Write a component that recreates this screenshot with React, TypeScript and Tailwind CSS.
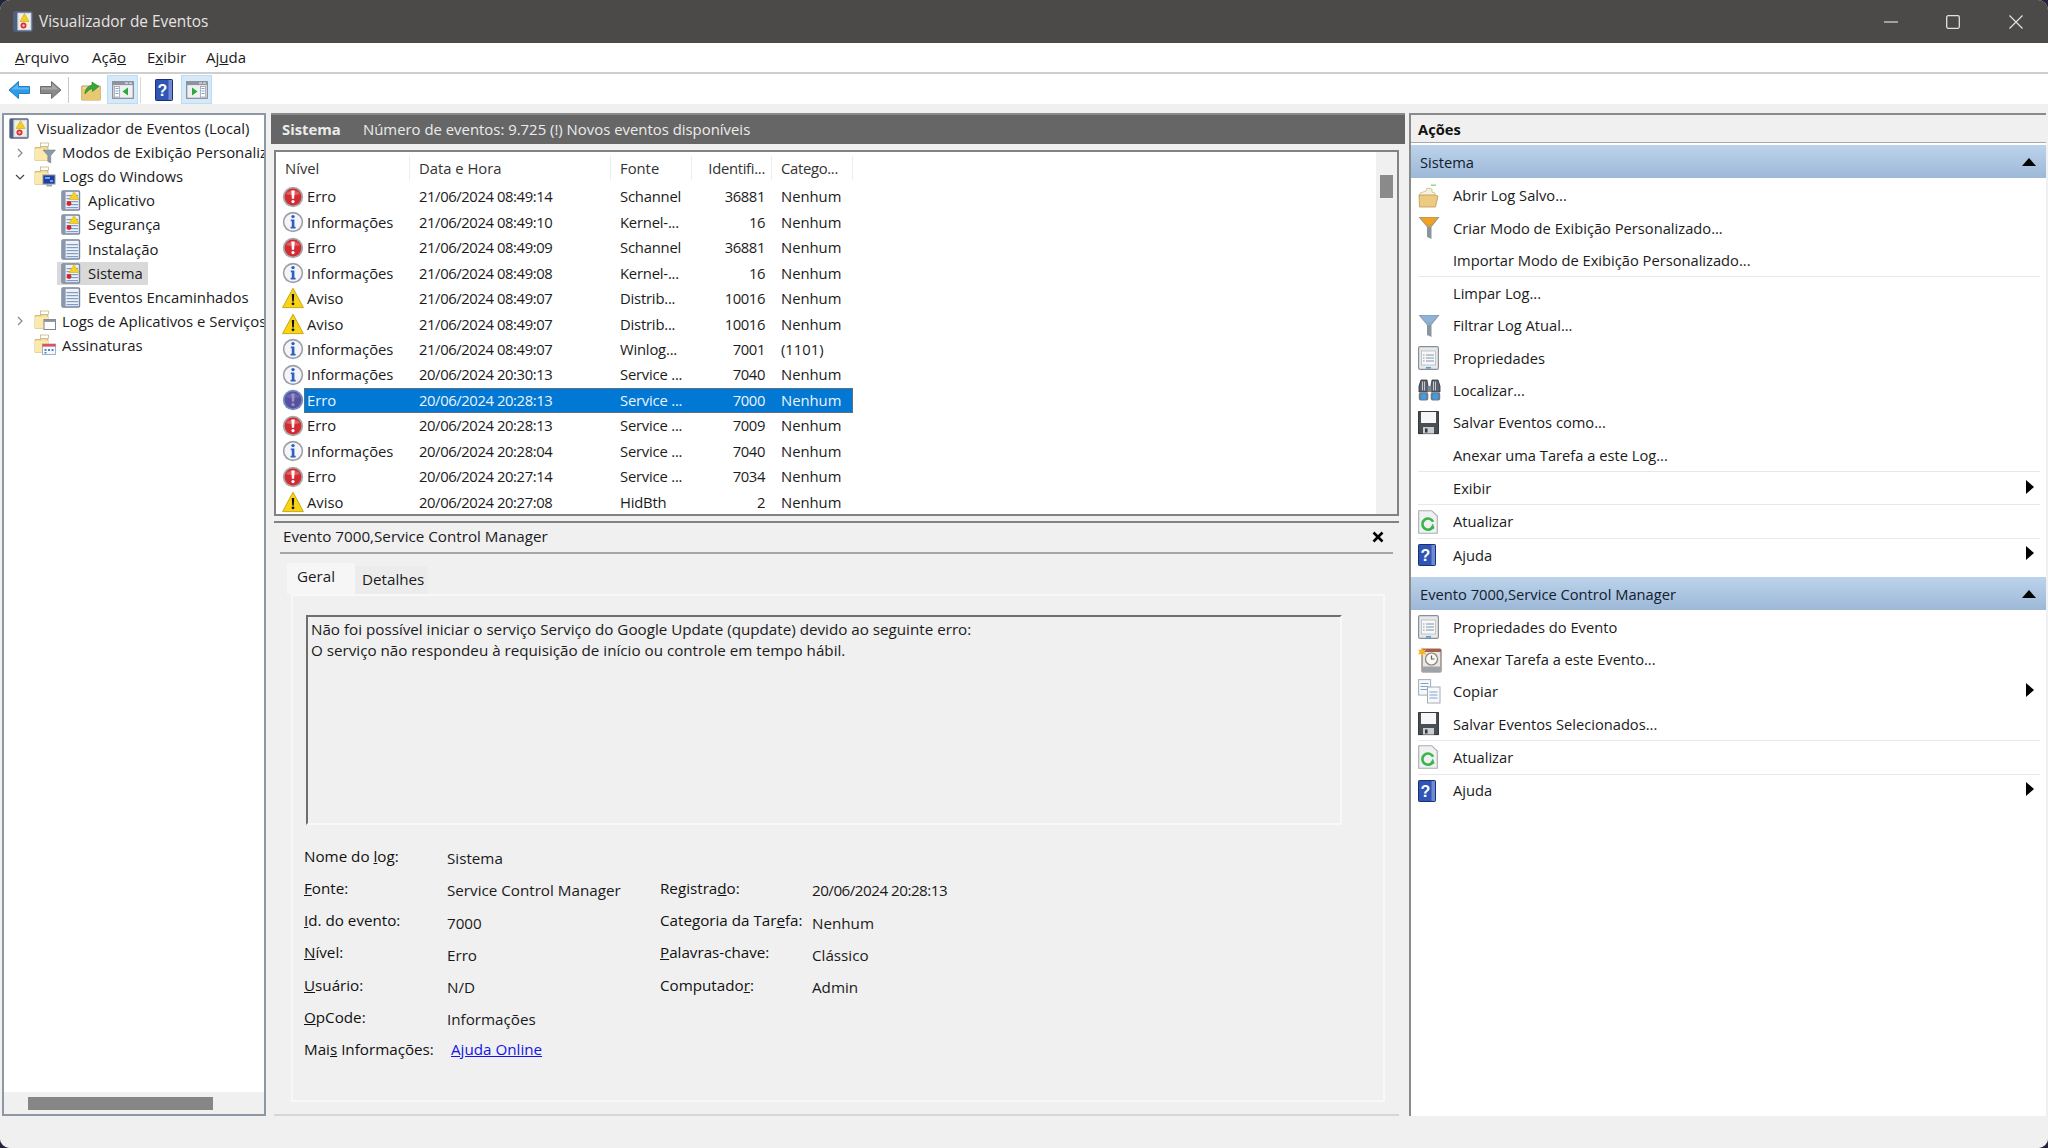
import type { ReactNode } from "react";

// ---- event level icons
function ErrorIcon({ selected }: { selected?: boolean }) {
  return (
    <svg width="22" height="22" viewBox="0 0 22 22" className="shrink-0">
      <circle cx="11" cy="11" r="10.2" fill={selected ? "#6f8fc0" : "#a8a8a8"} />
      <circle cx="11" cy="11" r="8.4" fill={selected ? "#5a4f9e" : "#d42a32"} />
      <path d="M4 8a8 7 0 0 1 14 0c-3 1.5-11 1.5-14 0z" fill="#fff" opacity={selected ? 0.12 : 0.25} />
      <path d="M9.3 4.5h3.4l-.6 8.2h-2.2z" fill={selected ? "#8f93cf" : "#fff"} />
      <circle cx="11" cy="15.6" r="1.6" fill={selected ? "#8f93cf" : "#fff"} />
    </svg>
  );
}

function InfoIcon() {
  return (
    <svg width="22" height="22" viewBox="0 0 22 22" className="shrink-0">
      <circle cx="11" cy="11" r="10.2" fill="#9c9fa6" />
      <circle cx="11" cy="11" r="8.6" fill="#f3f5f8" />
      <circle cx="11" cy="5.6" r="1.7" fill="#2f5fc4" />
      <path d="M8.8 8.6h3.6v7.2h1.2v1.6H8.6v-1.6h1.2v-5.6h-1z" fill="#2f5fc4" />
    </svg>
  );
}

function WarnIcon() {
  return (
    <svg width="22" height="22" viewBox="0 0 22 22" className="shrink-0">
      <path d="M11 1.2 21.4 20.6H.6z" fill="#f7d417" stroke="#c9a80f" strokeWidth="1" strokeLinejoin="round" />
      <path d="M9.8 7h2.4l-.4 7.4h-1.6z" fill="#111" />
      <circle cx="11" cy="16.8" r="1.4" fill="#111" />
    </svg>
  );
}

// ---- tree icons
function LogIcon({ alert }: { alert?: boolean }) {
  return (
    <svg width="20" height="21" viewBox="0 0 20 21" className="shrink-0">
      <rect x="1" y="1" width="17.5" height="19" rx="1" fill="#eef2f8" stroke="#76859a" strokeWidth="1.4" />
      <rect x="1" y="1" width="3.6" height="19" fill="#8a97aa" />
      {[5, 8, 11, 14, 17].map((y) => (
        <rect key={y} x="5.5" y={y} width="11.5" height="1.2" fill="#7d9cc8" />
      ))}
      {alert && <path d="M13 1.5 18 9.5H8z" fill="#f7d21e" stroke="#c9a419" strokeWidth=".5" />}
      {alert && <circle cx="8" cy="13.5" r="2.4" fill="#d5232c" />}
    </svg>
  );
}

function RootIcon() {
  return (
    <svg width="20" height="21" viewBox="0 0 20 21" className="shrink-0">
      <rect x="1" y="1" width="18" height="19" rx="1" fill="#d7dee9" stroke="#56688a" strokeWidth="1.4" />
      <rect x="1" y="1" width="3.4" height="19" fill="#4f5f80" />
      <rect x="6" y="3" width="11" height="15" fill="#f2f0dd" />
      <path d="M11.5 2.5 16 10.5H7z" fill="#f5cf1d" stroke="#b99a18" strokeWidth=".5" />
      <circle cx="10.5" cy="14.5" r="3" fill="#d8303a" />
      <circle cx="10.5" cy="14.5" r="1.2" fill="#f6c0c0" />
    </svg>
  );
}

function Folder({ children }: { children?: ReactNode }) {
  return (
    <svg width="22" height="22" viewBox="0 0 22 22" className="shrink-0">
      <path d="M1 5.5h6l1.2-2h5v2h.8v12.8H1z" fill="#f6de95" stroke="#c9b06a" strokeWidth=".8" />
      <rect x="6.5" y="1" width="8" height="3.5" fill="#fff" stroke="#b9a878" strokeWidth=".7" />
      <rect x="1" y="7" width="13" height="11.3" fill="#fbe9ae" />
      {children}
    </svg>
  );
}

function FolderFunnel() {
  return (
    <Folder>
      <path d="M9 8h12.5l-4.7 5.5V21l-3-1.6v-5.9z" fill="#8c9aa8" stroke="#6a7785" strokeWidth=".5" />
    </Folder>
  );
}

function FolderMonitor() {
  return (
    <Folder>
      <rect x="9" y="9" width="12" height="9" fill="#1d3f9f" stroke="#8b95a6" strokeWidth="1" />
      <path d="M11 11h5v2h-5zM16 14h3v2h-3z" fill="#75a3e8" />
      <rect x="12.5" y="18.5" width="5.5" height="2" fill="#9aa3b0" />
    </Folder>
  );
}

function FolderWindow() {
  return (
    <Folder>
      <rect x="10" y="9.5" width="11.5" height="10" fill="#fff" stroke="#7f8691" strokeWidth="1" />
      <rect x="10" y="9.5" width="11.5" height="2.4" fill="#8a93a0" />
    </Folder>
  );
}

function FolderCalendar() {
  return (
    <Folder>
      <rect x="8.5" y="10" width="13" height="10.5" fill="#f5f8fd" stroke="#8aa0bd" strokeWidth=".8" />
      <rect x="8.5" y="10" width="13" height="2.6" fill="#d8555a" />
      <path d="M10.5 15h2v2h-2zM14 15h2v2h-2zM17.5 15h2v2h-2zM10.5 18h2v1.5h-2z" fill="#4f88d0" />
    </Folder>
  );
}

// ---- toolbar icons
function ArrowIcon({ dir, color, edge }: { dir: "left" | "right"; color: string; edge: string }) {
  return (
    <svg width="23" height="20" viewBox="0 0 23 20" className={dir === "right" ? "scale-x-[-1]" : ""}>
      <path d="M1 10 10.5 1.5v5h11v7h-11v5z" fill={color} stroke={edge} strokeWidth="1" strokeLinejoin="round" />
      <path d="M3.5 9.5 10 4v3.5h11v2z" fill="#fff" opacity=".25" />
    </svg>
  );
}

function UpFolderIcon() {
  return (
    <svg width="20" height="22" viewBox="0 0 20 22">
      <path d="M.8 7h18.4v14H.8z" fill="#f1d98f" stroke="#b79f5f" strokeWidth="1" />
      <path d="M.8 10h18.4v11H.8z" fill="#e9c873" />
      <path d="M4 15c0-5 3-8 7-9V3l7 4.5-6.5 5V9.4C8.6 10 6.5 12 4 15z" fill="#36a83a" stroke="#217c27" strokeWidth=".6" />
    </svg>
  );
}

function PaneIcon({ side }: { side: "left" | "right" }) {
  return (
    <svg width="22" height="18" viewBox="0 0 22 18">
      <rect x=".7" y=".7" width="20.6" height="16.6" fill="#eef0f3" stroke="#848b95" strokeWidth="1.2" />
      <rect x=".7" y=".7" width="20.6" height="3.4" fill="#8d949e" />
      <path d="M17 1.5h3v1.2h-3zM13 1.5h3v1.2h-3z" fill="#dfe3e8" />
      {side === "left" ? (
        <>
          <rect x="2.5" y="5.5" width="5" height="10.5" fill="#fff" stroke="#8d97a3" strokeWidth=".7" />
          <path d="M3.5 7.5h3M3.5 10h3M3.5 12.5h3" stroke="#7da0c8" strokeWidth="1" />
          <path d="M16 6.5v8l-5.5-4z" fill="#2ea83a" />
        </>
      ) : (
        <>
          <rect x="14.5" y="5.5" width="5" height="10.5" fill="#fff" stroke="#8d97a3" strokeWidth=".7" />
          <path d="M15.5 7.5h3M15.5 10h3M15.5 12.5h3" stroke="#7da0c8" strokeWidth="1" />
          <path d="M6 6.5v8l5.5-4z" fill="#2ea83a" />
        </>
      )}
    </svg>
  );
}

function HelpBookIcon() {
  return (
    <svg width="18" height="22" viewBox="0 0 18 22">
      <rect x=".5" y=".5" width="17" height="21" rx=".8" fill="#2f55b5" stroke="#1c2f73" strokeWidth="1" />
      <rect x="13.5" y="1" width="3.5" height="20" fill="#6f8bd6" />
      <text x="7.5" y="16.5" textAnchor="middle" fontSize="16" fontWeight="700" fill="#fff" fontFamily="Liberation Sans, sans-serif">?</text>
    </svg>
  );
}

// ---- action pane icons
function OpenFolderIcon() {
  return (
    <svg width="22" height="24" viewBox="0 0 22 24">
      <path d="M13 .6h5v1.2h-5z" fill="#6fd56f" />
      <path d="M2 9l6-2 1-3 5 1v3l3 1v3H2z" fill="#f5f1dd" stroke="#c5b689" strokeWidth=".7" />
      <path d="M1 11h16l3 1-2.5 11H1.5z" fill="#eccb80" stroke="#b99b55" strokeWidth=".8" />
    </svg>
  );
}

function FunnelIcon({ top, stem }: { top: string; stem: string }) {
  return (
    <svg width="22" height="24" viewBox="0 0 22 24">
      <path d="M.5 1h21L13.5 11v12l-4.5-2V11z" fill={stem} />
      <path d="M2 1.5h18l-5.5 6.5h-7z" fill={top} />
      <path d="M7.5 8h7l-1.2 3h-4.6z" fill={top} opacity=".7" />
    </svg>
  );
}

function SheetIcon() {
  return (
    <svg width="21" height="24" viewBox="0 0 21 24">
      <rect x=".6" y=".6" width="19.8" height="22.8" rx="1.5" fill="#e6e8ea" stroke="#8b8f95" strokeWidth="1.2" />
      <rect x="3.5" y="5" width="14" height="14" fill="#f7f8f9" stroke="#aeb3b8" strokeWidth=".7" />
      <path d="M5 9h1.5M8 9h8M5 12h1.5M8 12h8M5 15h1.5M8 15h8" stroke="#8395ab" strokeWidth="1.1" />
      <rect x="8" y="21" width="5" height="1.6" fill="#45a0da" />
    </svg>
  );
}

function BinocularsIcon() {
  return (
    <svg width="23" height="24" viewBox="0 0 23 24">
      <path d="M3 2h6l1 6v6H1V8z" fill="#59626e" stroke="#2e343c" strokeWidth=".8" />
      <path d="M14 2h6l2 6v6h-9V8z" fill="#59626e" stroke="#2e343c" strokeWidth=".8" />
      <path d="M4.5 3.5v9M6.5 3.5v9M15.5 3.5v9M17.5 3.5v9" stroke="#cfd4da" strokeWidth=".9" />
      <rect x="9.5" y="8" width="4" height="6" fill="#7f8791" />
      <rect x=".8" y="14.5" width="9.5" height="8" rx="2" fill="#6f7a88" />
      <rect x="12.7" y="14.5" width="9.5" height="8" rx="2" fill="#6f7a88" />
      <circle cx="5.5" cy="18.5" r="3" fill="#3d9ee8" />
      <circle cx="17.5" cy="18.5" r="3" fill="#3d9ee8" />
    </svg>
  );
}

function FloppyIcon() {
  return (
    <svg width="21" height="24" viewBox="0 0 21 24">
      <rect x=".6" y=".6" width="19.8" height="22" fill="#4a4f55" stroke="#2b2e33" strokeWidth="1" />
      <rect x="3" y="1" width="15" height="11" fill="#f6f6f6" />
      <rect x="5" y="16" width="11" height="6.5" fill="#c9ccd0" />
      <rect x="7" y="17.5" width="2.5" height="4" fill="#33363b" />
    </svg>
  );
}

function RefreshIcon() {
  return (
    <svg width="20" height="24" viewBox="0 0 20 24">
      <path d="M.7.7h13l5.6 5.4v17.2H.7z" fill="#f0f1f2" stroke="#a8adb3" strokeWidth="1.1" />
      <path d="M14.8 17a5.6 5.6 0 1 1 .3-5.2" fill="none" stroke="#3ab54a" strokeWidth="2.6" />
      <path d="M10.5 21l6-2.8-1.6-4.6z" fill="#3ab54a" />
    </svg>
  );
}

function TaskIcon() {
  return (
    <svg width="24" height="26" viewBox="0 0 24 26">
      <rect x="4" y="2" width="19" height="23" rx="1" fill="#e8e6e3" stroke="#83776d" strokeWidth="1.2" />
      <rect x="4" y="2" width="19" height="3" fill="#a85d4a" />
      <rect x="4" y="19.5" width="19" height="5.5" fill="#9fa3a8" />
      <circle cx="13.5" cy="12" r="6" fill="#fbf7ec" stroke="#83837f" strokeWidth="1.2" />
      <path d="M13.5 8.5V12h3" stroke="#52677c" strokeWidth="1.2" fill="none" />
      <path d="M4 0l1.3 3 3-.6L6.4 5 8.5 7.4 5.3 7 4 10 2.7 7 0 7.4 1.6 5 0 2.4l2.7.6z" fill="#f4b42c" />
    </svg>
  );
}

function CopyIcon() {
  return (
    <svg width="23" height="25" viewBox="0 0 23 25">
      <rect x=".6" y=".6" width="12" height="15.5" fill="#f7f8fa" stroke="#a6acb3" strokeWidth="1" />
      <path d="M2.5 4.5h8M2.5 7.5h8M2.5 10.5h8" stroke="#7da4d3" strokeWidth="1" />
      <rect x="9.5" y="8" width="12.5" height="16" fill="#f7f8fa" stroke="#a6acb3" strokeWidth="1" />
      <path d="M11.5 13h8M11.5 16h8M11.5 19h8" stroke="#7da4d3" strokeWidth="1" />
    </svg>
  );
}

// ---- data
type Level = "Erro" | "Informações" | "Aviso";

const events: { level: Level; date: string; source: string; id: string; cat: string; selected?: boolean }[] = [
  { level: "Erro", date: "21/06/2024 08:49:14", source: "Schannel", id: "36881", cat: "Nenhum" },
  { level: "Informações", date: "21/06/2024 08:49:10", source: "Kernel-...", id: "16", cat: "Nenhum" },
  { level: "Erro", date: "21/06/2024 08:49:09", source: "Schannel", id: "36881", cat: "Nenhum" },
  { level: "Informações", date: "21/06/2024 08:49:08", source: "Kernel-...", id: "16", cat: "Nenhum" },
  { level: "Aviso", date: "21/06/2024 08:49:07", source: "Distrib...", id: "10016", cat: "Nenhum" },
  { level: "Aviso", date: "21/06/2024 08:49:07", source: "Distrib...", id: "10016", cat: "Nenhum" },
  { level: "Informações", date: "21/06/2024 08:49:07", source: "Winlog...", id: "7001", cat: "(1101)" },
  { level: "Informações", date: "20/06/2024 20:30:13", source: "Service ...", id: "7040", cat: "Nenhum" },
  { level: "Erro", date: "20/06/2024 20:28:13", source: "Service ...", id: "7000", cat: "Nenhum", selected: true },
  { level: "Erro", date: "20/06/2024 20:28:13", source: "Service ...", id: "7009", cat: "Nenhum" },
  { level: "Informações", date: "20/06/2024 20:28:04", source: "Service ...", id: "7040", cat: "Nenhum" },
  { level: "Erro", date: "20/06/2024 20:27:14", source: "Service ...", id: "7034", cat: "Nenhum" },
  { level: "Aviso", date: "20/06/2024 20:27:08", source: "HidBth", id: "2", cat: "Nenhum" },
];

function TreeRow({ depth, chevron, icon, label, active }: { depth: number; chevron?: "right" | "down"; icon: ReactNode; label: string; active?: boolean }) {
  return (
    <div className={`flex h-[24.1px] items-center whitespace-nowrap ${depth === 0 ? "pl-[5px]" : depth === 1 ? "pl-[9px]" : "pl-[53px]"}`}>
      {depth === 1 && (
        <span className="flex w-[21px] shrink-0 items-center">
          {chevron === "right" && (
            <svg width="10" height="10" viewBox="0 0 10 10" className="ml-[2px]"><path d="M3 1l4 4-4 4" fill="none" stroke="#8a8a8a" strokeWidth="1.2" /></svg>
          )}
          {chevron === "down" && (
            <svg width="10" height="10" viewBox="0 0 10 10" className="ml-[2px]"><path d="M1 3l4 4 4-4" fill="none" stroke="#444" strokeWidth="1.2" /></svg>
          )}
        </span>
      )}
      <span className={`flex h-[23px] items-center ${active ? "bg-[#d9d9d9] pr-[5px]" : ""} ${depth === 2 ? "pl-[4px]" : ""}`}>
        {icon}
        <span className={depth === 0 ? "ml-[8px]" : depth === 1 ? "ml-[6px]" : "ml-[7px]"}>{label}</span>
      </span>
    </div>
  );
}

function Band({ title }: { title: string }) {
  return (
    <div className="flex h-[33px] items-center justify-between bg-gradient-to-b from-[#bcd3ea] to-[#9db8d8] pl-[9px] pr-[10px] text-[#10202f]">
      <span className="pt-[1px]">{title}</span>
      <svg width="14" height="8" viewBox="0 0 14 8"><path d="M7 0l7 8H0z" fill="#000" /></svg>
    </div>
  );
}

function Action({ icon, label, more }: { icon?: ReactNode; label: string; more?: boolean }) {
  return (
    <div className="flex h-[32.3px] items-center">
      <span className="flex w-[42px] shrink-0 items-center pl-[7px]">{icon}</span>
      <span className="flex-1">{label}</span>
      {more && (
        <svg width="8" height="14" viewBox="0 0 8 14" className="mb-[3px] mr-[12px]"><path d="M0 0l8 7-8 7z" fill="#000" /></svg>
      )}
    </div>
  );
}

function Group({ children, last }: { children: ReactNode; last?: boolean }) {
  return (
    <div>
      {children}
      {!last && <div className="ml-[7px] mr-[6px] h-px bg-[#e8e8e8]" />}
    </div>
  );
}

function Field({ label, value }: { label: ReactNode; value: string }) {
  return (
    <>
      <span className="w-[143px] shrink-0 text-[#111]">{label}</span>
      <span className="mt-[2.5px] w-[213px] shrink-0 text-[#1a1a1a]">{value}</span>
    </>
  );
}

function FieldRight({ label, value, tight }: { label: ReactNode; value: string; tight?: boolean }) {
  return (
    <>
      <span className="w-[152px] shrink-0 text-[#111]">{label}</span>
      <span className={`mt-[2.5px] text-[#1a1a1a] ${tight ? "tracking-[-0.5px]" : ""}`}>{value}</span>
    </>
  );
}

export default function App() {
  return (
    <div className="h-[1148px] w-[2048px] overflow-hidden bg-[#23233a]">
      <div className="flex h-full flex-col overflow-hidden rounded-[10px] bg-[#f0f0f0] font-['Open_Sans',sans-serif] text-[14.8px] leading-none text-[#1b1b1b]">
        {/* title bar */}
        <div className="flex h-[43px] shrink-0 items-center bg-[#4c4a48] pl-[13px] text-[#e4e4e4]">
          <RootIcon />
          <span className="ml-[6px] pt-[1px] text-[15.4px]">Visualizador de Eventos</span>
          <div className="ml-auto flex items-center">
            <svg width="14" height="14" viewBox="0 0 14 14" className="mr-[48px]"><path d="M0 7h14" stroke="#cfcfcf" strokeWidth="1.3" /></svg>
            <svg width="14" height="14" viewBox="0 0 14 14" className="mr-[49px]"><rect x=".7" y=".7" width="12.6" height="12.6" rx="1.5" fill="none" stroke="#e2e2e2" strokeWidth="1.3" /></svg>
            <svg width="14" height="14" viewBox="0 0 14 14" className="mr-[25px]"><path d="M.5.5l13 13M13.5.5l-13 13" stroke="#e2e2e2" strokeWidth="1.2" /></svg>
          </div>
        </div>

        {/* menu */}
        <div className="flex h-[31px] shrink-0 items-center border-b-2 border-[#cfcfcf] bg-white pl-[15px] text-[15px]">
          <span className="w-[77px]"><u>A</u>rquivo</span>
          <span className="w-[55px]">Açã<u>o</u></span>
          <span className="w-[59px]">E<u>x</u>ibir</span>
          <span>Aj<u>u</u>da</span>
        </div>

        {/* toolbar */}
        <div className="flex h-[30px] shrink-0 items-center bg-white pl-[8px] pt-[1px]">
          <ArrowIcon dir="left" color="#2c9be8" edge="#1f7fc9" />
          <span className="ml-[8px]"><ArrowIcon dir="right" color="#8a8a8a" edge="#6e6e6e" /></span>
          <span className="ml-[6px] h-[26px] w-px bg-[#c8c8c8]" />
          <span className="ml-[12px]"><UpFolderIcon /></span>
          <span className="ml-[6px] flex h-[29px] w-[31px] items-center justify-center border border-[#bcdcf4] bg-[#d6e9f8]"><PaneIcon side="left" /></span>
          <span className="ml-[2px] h-[26px] w-px bg-[#d8d8d8]" />
          <span className="ml-[14px]"><HelpBookIcon /></span>
          <span className="ml-[8px] flex h-[29px] w-[31px] items-center justify-center border border-[#bcdcf4] bg-[#d6e9f8]"><PaneIcon side="right" /></span>
        </div>

        {/* body */}
        <div className="flex min-h-0 flex-1 pl-[2px] pr-[2px] pt-[9px]">
          {/* tree */}
          <div className="flex w-[264px] shrink-0 flex-col overflow-hidden border-2 border-[#8e98a4] bg-white">
            <div className="min-h-0 flex-1 overflow-hidden pt-[1.5px] text-[14.9px]">
              <TreeRow depth={0} icon={<RootIcon />} label="Visualizador de Eventos (Local)" />
              <TreeRow depth={1} chevron="right" icon={<FolderFunnel />} label="Modos de Exibição Personalizados" />
              <TreeRow depth={1} chevron="down" icon={<FolderMonitor />} label="Logs do Windows" />
              <TreeRow depth={2} icon={<LogIcon alert />} label="Aplicativo" />
              <TreeRow depth={2} icon={<LogIcon alert />} label="Segurança" />
              <TreeRow depth={2} icon={<LogIcon />} label="Instalação" />
              <TreeRow depth={2} active icon={<LogIcon alert />} label="Sistema" />
              <TreeRow depth={2} icon={<LogIcon />} label="Eventos Encaminhados" />
              <TreeRow depth={1} chevron="right" icon={<FolderWindow />} label="Logs de Aplicativos e Serviços" />
              <TreeRow depth={1} icon={<FolderCalendar />} label="Assinaturas" />
            </div>
            <div className="flex h-[22px] shrink-0 items-center bg-[#f0f0f0] pl-[24px]">
              <div className="h-[13px] w-[185px] bg-[#868686]" />
            </div>
          </div>

          {/* middle */}
          <div className="ml-[5px] flex w-[1134px] shrink-0 flex-col">
            <div className="flex h-[31px] shrink-0 items-center border-t-2 border-[#8a8a8a] bg-[#666666] pl-[11px] text-[#ececec]">
              <span className="w-[81px] font-bold">Sistema</span>
              <span className="text-[14.9px]">Número de eventos: 9.725 (!) Novos eventos disponíveis</span>
            </div>

            {/* event list */}
            <div className="ml-[3px] mt-[6px] flex h-[366px] w-[1125px] shrink-0 overflow-hidden border-2 border-[#828282] bg-white">
              <div className="min-w-0 flex-1">
                <div className="flex h-[32px] items-center text-[#333]">
                  <span className="h-[24px] w-[134px] border-r border-[#eeeeee] pl-[9px] leading-[24px]">Nível</span>
                  <span className="h-[24px] w-[201px] border-r border-[#eeeeee] pl-[9px] leading-[24px]">Data e Hora</span>
                  <span className="h-[24px] w-[81px] border-r border-[#eeeeee] pl-[9px] leading-[24px]">Fonte</span>
                  <span className="h-[24px] w-[80px] border-r border-[#eeeeee] pr-[6px] text-right leading-[24px] tracking-[-0.3px]">Identifi...</span>
                  <span className="h-[24px] w-[81px] border-r border-[#eeeeee] pl-[9px] leading-[24px] tracking-[-0.3px]">Catego...</span>
                </div>
                {events.map((e, i) => (
                  <div key={i} className="flex h-[25.45px] items-center">
                    <span className="flex w-[28px] shrink-0 items-center pl-[6px]">
                      {e.level === "Erro" ? <ErrorIcon selected={e.selected} /> : e.level === "Informações" ? <InfoIcon /> : <WarnIcon />}
                    </span>
                    <div className={`flex h-[25px] items-center ${e.selected ? "bg-[#0078d4] text-[#eef4fb] shadow-[inset_0_0_0_1px_#5b6f80]" : ""}`}>
                      <span className="w-[106px] pl-[3px]">{e.level}</span>
                      <span className="w-[201px] pl-[9px] tracking-[-0.4px]">{e.date}</span>
                      <span className="w-[81px] pl-[9px] tracking-[-0.2px]">{e.source}</span>
                      <span className="w-[80px] pr-[7px] text-right tracking-[-0.4px]">{e.id}</span>
                      <span className="w-[81px] pl-[9px]">{e.cat}</span>
                    </div>
                  </div>
                ))}
              </div>
              <div className="w-[21px] shrink-0 bg-[#f0f0f0] pl-[4px] pt-[23px]">
                <div className="h-[23px] w-[13px] bg-[#8a8a8a]" />
              </div>
            </div>

            {/* event detail */}
            <div className="ml-[3px] mt-[5px] flex min-h-0 w-[1125px] flex-1 flex-col border-b-2 border-t-2 border-b-[#d6d6d6] border-t-[#828282] bg-[#f0f0f0] text-[15.2px]">
              <div className="mx-[6px] flex h-[31px] shrink-0 items-center justify-between border-b-2 border-[#a6a6a6] pb-[1px] pl-[3px] pr-[9px]">
                <span>Evento 7000,Service Control Manager</span>
                <svg width="12" height="12" viewBox="0 0 12 12"><path d="M1.5 1.5l9 9M10.5 1.5l-9 9" stroke="#000" strokeWidth="2.6" /></svg>
              </div>
              <div className="ml-[13px] mt-[10px] flex h-[30px] shrink-0 items-end">
                <span className="flex h-[31px] w-[68px] items-center bg-[#f6f6f6] pb-[3px] pl-[10px]">Geral</span>
                <span className="flex h-[28px] w-[72px] items-center bg-[#ececec] pl-[7px]">Detalhes</span>
              </div>
              <div className="ml-[17px] h-[508px] w-[1094px] shrink-0 border-2 border-[#f8f8f8] bg-[#f0f0f0] pl-[13px] pt-[19px]">
                <div className="h-[210px] w-[1036px] border-2 border-[#f8f8f8] border-l-[#6e6e6e] border-t-[#6e6e6e] pl-[3px] pt-[2px] leading-[21px]">
                  <div>Não foi possível iniciar o serviço Serviço do Google Update (qupdate) devido ao seguinte erro:</div>
                  <div>O serviço não respondeu à requisição de início ou controle em tempo hábil.</div>
                </div>
                <div className="-ml-[2px] mt-[23.5px]">
                  <div className="flex h-[32.3px] items-start">
                    <Field label={<>Nome do <u>l</u>og:</>} value="Sistema" />
                  </div>
                  <div className="flex h-[32.3px] items-start">
                    <Field label={<><u>F</u>onte:</>} value="Service Control Manager" />
                    <FieldRight label={<>Registra<u>d</u>o:</>} value="20/06/2024 20:28:13" tight />
                  </div>
                  <div className="flex h-[32.3px] items-start">
                    <Field label={<><u>I</u>d. do evento:</>} value="7000" />
                    <FieldRight label={<>Categoria da Tar<u>e</u>fa:</>} value="Nenhum" />
                  </div>
                  <div className="flex h-[32.3px] items-start">
                    <Field label={<><u>N</u>ível:</>} value="Erro" />
                    <FieldRight label={<><u>P</u>alavras-chave:</>} value="Clássico" />
                  </div>
                  <div className="flex h-[32.3px] items-start">
                    <Field label={<><u>U</u>suário:</>} value="N/D" />
                    <FieldRight label={<>Computado<u>r</u>:</>} value="Admin" />
                  </div>
                  <div className="flex h-[32.3px] items-start">
                    <Field label={<><u>O</u>pCode:</>} value="Informações" />
                  </div>
                  <div className="flex h-[32.3px] items-start">
                    <span className="w-[147px] shrink-0 text-[#111]">Mai<u>s</u> Informações:</span>
                    <span className="text-[#1414e6] underline">Ajuda Online</span>
                  </div>
                </div>
              </div>
            </div>
          </div>

          {/* actions */}
          <div className="ml-[4px] flex min-w-0 flex-1 flex-col border-l-2 border-t-2 border-[#8a8a8a] bg-white text-[14.7px]">
            <div className="flex h-[28px] shrink-0 items-center border-b border-[#a8a8a8] bg-[#f0f0f0] pl-[7px] pt-[2px] font-bold text-[#111]">Ações</div>
            <div className="mt-[2px]" />
            <Band title="Sistema" />
            <div className="pt-[1.5px]">
              <Group>
                <Action icon={<OpenFolderIcon />} label="Abrir Log Salvo..." />
                <Action icon={<FunnelIcon top="#f2a21e" stem="#8b95a0" />} label="Criar Modo de Exibição Personalizado..." />
                <Action label="Importar Modo de Exibição Personalizado..." />
              </Group>
              <Group>
                <Action label="Limpar Log..." />
                <Action icon={<FunnelIcon top="#8db3d9" stem="#8b95a0" />} label="Filtrar Log Atual..." />
                <Action icon={<SheetIcon />} label="Propriedades" />
                <Action icon={<BinocularsIcon />} label="Localizar..." />
                <Action icon={<FloppyIcon />} label="Salvar Eventos como..." />
                <Action label="Anexar uma Tarefa a este Log..." />
              </Group>
              <Group>
                <Action label="Exibir" more />
              </Group>
              <Group>
                <Action icon={<RefreshIcon />} label="Atualizar" />
              </Group>
              <Group last>
                <Action icon={<HelpBookIcon />} label="Ajuda" more />
              </Group>
            </div>
            <div className="mt-[6px]" />
            <Band title="Evento 7000,Service Control Manager" />
            <div className="pt-[1px]">
              <Group>
                <Action icon={<SheetIcon />} label="Propriedades do Evento" />
                <Action icon={<TaskIcon />} label="Anexar Tarefa a este Evento..." />
                <Action icon={<CopyIcon />} label="Copiar" more />
                <Action icon={<FloppyIcon />} label="Salvar Eventos Selecionados..." />
              </Group>
              <Group>
                <Action icon={<RefreshIcon />} label="Atualizar" />
              </Group>
              <Group last>
                <Action icon={<HelpBookIcon />} label="Ajuda" more />
              </Group>
            </div>
          </div>
        </div>

        {/* status bar */}
        <div className="h-[32px] shrink-0 bg-[#f0f0f0]" />
      </div>
    </div>
  );
}
